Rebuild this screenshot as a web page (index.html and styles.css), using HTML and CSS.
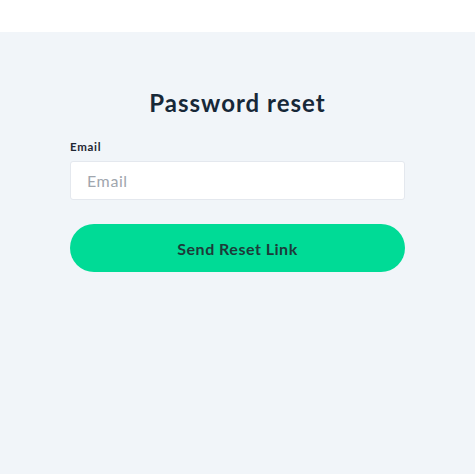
FILE: index.html
```html
<!DOCTYPE html>
<html lang="en">
<head>
<meta charset="utf-8">
<title>Password reset</title>
<link rel="stylesheet" href="styles.css">
</head>
<body>
<header class="topbar"></header>
<main class="page">
  <form class="card">
    <h1 class="title">Password reset</h1>
    <label class="label" for="email">Email</label>
    <input class="input" id="email" type="email" placeholder="Email">
    <button class="button" type="button">Send Reset Link</button>
  </form>
</main>
</body>
</html>
```

FILE: styles.css
```css
* { box-sizing: border-box; }
html, body { margin: 0; height: 100%; }
body {
  font-family: Lato, "Open Sans", Arial, sans-serif;
  background: #f1f5f9;
  display: flex;
  flex-direction: column;
}
.topbar {
  height: 32px;
  background: #ffffff;
  flex: none;
}
.page {
  flex: 1;
  display: flex;
  justify-content: center;
}
.card {
  width: 335px;
  display: flex;
  flex-direction: column;
  padding-top: 57px;
}
.title {
  margin: 0 0 23px;
  text-align: center;
  font-size: 24px;
  font-weight: 700;
  letter-spacing: 1px;
  color: #172838;
  line-height: 28px;
}
.label {
  font-size: 11.5px;
  font-weight: 700;
  letter-spacing: 0.7px;
  color: #1f2733;
  line-height: 14px;
  margin-bottom: 7px;
}
.input {
  height: 39px;
  border: 1px solid #e4e8ee;
  border-radius: 3px;
  background: #fff;
  padding: 0 16px;
  font-family: inherit;
  font-size: 16px;
  letter-spacing: 0.6px;
  color: #1f2733;
  outline: none;
}
.input::placeholder { color: #a0a6ae; }
.button {
  margin-top: 24px;
  height: 48px;
  border: none;
  border-radius: 24px;
  background: #00db96;
  color: #1d3b3a;
  font-family: inherit;
  font-size: 16px;
  font-weight: 700;
  letter-spacing: 0.5px;
  cursor: pointer;
}
```
